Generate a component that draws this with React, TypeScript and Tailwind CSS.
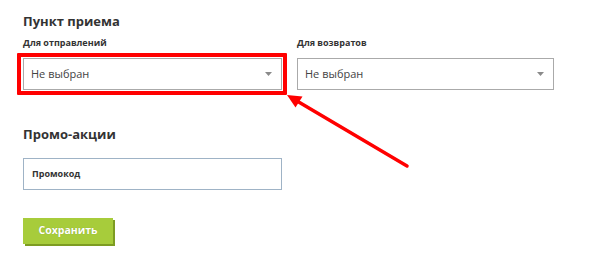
import React from 'react';

const Caret = () => (
  <svg className="w-[7px] h-[4px]" viewBox="0 0 7 4">
    <polygon points="0,0 7,0 3.5,4" fill="#8a8a8a" />
  </svg>
);

const Select = ({ value }: { value: string }) => (
  <div className="h-[32px] border border-[#aaaaaa] bg-white flex items-center justify-between pl-[7px] pr-[9px]">
    <span className="text-[11px] text-[#444444]">{value}</span>
    <Caret />
  </div>
);

const App = () => {
  return (
    <div
      className="relative w-[593px] h-[269px] bg-white overflow-hidden pl-[23px] pt-[11px]"
      style={{ fontFamily: '"Open Sans", "Liberation Sans", sans-serif' }}
    >
      {/* Пункт приема */}
      <h2 className="text-[13px] leading-[20px] font-bold text-[#333333]">Пункт приема</h2>
      <div className="flex gap-[15px] mt-[5px]">
        <div className="w-[259px]">
          <div className="text-[9px] leading-[14px] font-bold text-[#333333]">Для отправлений</div>
          <div className="relative mt-[8px]">
            <Select value="Не выбран" />
            {/* annotation frame */}
            <div className="absolute -left-[6px] -top-[5px] -right-[5px] -bottom-[5px] border-[4px] border-[#ff0000] rounded-[1px]" />
          </div>
        </div>
        <div className="w-[257px]">
          <div className="text-[9px] leading-[14px] font-bold text-[#333333]">Для возвратов</div>
          <div className="mt-[8px]">
            <Select value="Не выбран" />
          </div>
        </div>
      </div>

      {/* Промо-акции */}
      <h2 className="mt-[34px] text-[13px] leading-[20px] font-bold text-[#333333]">Промо-акции</h2>
      <div className="mt-[14px] w-[259px] h-[32px] border border-[#9fb3c6] flex items-center pl-[8px]">
        <span className="text-[9px] font-bold text-[#333333]">Промокод</span>
      </div>

      <button className="mt-[28px] w-[90px] h-[26px] bg-[#a7cc3b] shadow-[2px_2px_0_#7d9c22] text-white text-[10.5px] font-bold [text-shadow:0_0_1px_rgba(0,0,0,0.2)]">
        Сохранить
      </button>

      {/* red arrow */}
      <svg className="absolute inset-0 w-full h-full pointer-events-none" viewBox="0 0 593 269">
        <line x1="407" y1="166" x2="297" y2="101" stroke="#ff0000" strokeWidth="3.5" strokeLinecap="round" />
        <polygon points="287,95 295.5,107.5 302.5,96.5" fill="#ff0000" />
      </svg>
    </div>
  );
};

export default App;
